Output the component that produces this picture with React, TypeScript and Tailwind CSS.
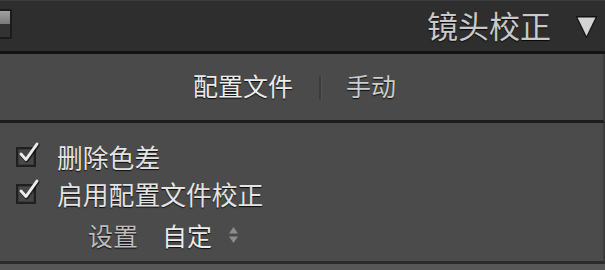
import React from 'react'

const shadow = '[text-shadow:0_1px_1px_rgba(0,0,0,0.85)]'

function CheckBox() {
  return (
    <div className="relative w-[20px] h-[20px] shrink-0">
      <div className="w-full h-full border-2 border-[#202020] bg-[#474747] shadow-[inset_0_0_0_1px_#3a3a3a]" />
      <svg
        className="absolute -top-[5px] left-[2px] w-[22px] h-[22px] overflow-visible"
        viewBox="0 0 22 22"
      >
        <path
          d="M3 12 L8 17.5 L19 2"
          fill="none"
          stroke="#000"
          strokeOpacity="0.55"
          strokeWidth="4"
          strokeLinecap="round"
          strokeLinejoin="round"
          transform="translate(0.6 1)"
        />
        <path
          d="M3 12 L8 17.5 L19 2"
          fill="none"
          stroke="#ededed"
          strokeWidth="3"
          strokeLinecap="round"
          strokeLinejoin="round"
        />
      </svg>
    </div>
  )
}

function CheckRow({ label }: { label: string }) {
  return (
    <div className="h-[37px] flex items-center pl-[16px] gap-[21px]">
      <CheckBox />
      <span className={`text-[25.8px] leading-none text-[#e4e4e4] ${shadow}`}>{label}</span>
    </div>
  )
}

export default function App() {
  return (
    <div className="w-[605px] h-[270px] overflow-hidden flex flex-col bg-[#555] font-['Noto_Sans_CJK_SC','Noto_Sans',sans-serif]">
      {/* panel header */}
      <div className="h-[54px] shrink-0 flex items-center bg-[#2e2e2e] border-t border-[#3c3c3c] border-b-[3px] border-b-[#131313]">
        <div className="w-[12px] h-[30px] -mt-[4px] flex flex-col border-2 border-l-0 border-[#1b1b1b] rounded-r-[2px] overflow-hidden">
          <div className="h-1/2 bg-gradient-to-b from-[#a0a0a0] to-[#7a7a7a]" />
          <div className="h-1/2 bg-[#333]" />
        </div>
        <span className={`ml-auto text-[31px] leading-none text-[#c9c9c9] -mt-[3px] ${shadow}`}>
          镜头校正
        </span>
        <svg className="shrink-0 ml-[24px] mr-[7px] w-[23px] h-[24px] mt-[1px]" viewBox="0 0 23 24">
          <path d="M0.5 1 H22.5 L11.5 23.5 Z" fill="#121212" />
          <path d="M2.5 2.5 H20.5 L11.5 21 Z" fill="#d4d4d4" />
        </svg>
      </div>

      {/* tabs */}
      <div className="h-[69px] shrink-0 flex items-center pl-[193px] bg-[#4a4a4a] border-b-[3px] border-[#1c1c1c] border-r-2 border-r-[#3c3c3c]">
        <span className={`text-[25px] leading-none text-[#ececec] -mt-[4px] ${shadow}`}>配置文件</span>
        <span className="ml-[26px] w-[2px] h-[23px] bg-[#3a3a3a] shadow-[1px_0_0_#555]" />
        <span className={`ml-[25px] text-[25px] leading-none text-[#cdcdcd] -mt-[4px] ${shadow}`}>手动</span>
      </div>

      {/* body */}
      <div className="h-[141px] shrink-0 pt-[15px] bg-[#4b4b4b] border-b-[3px] border-[#2a2a2a] border-r-2 border-r-[#3c3c3c]">
        <CheckRow label="删除色差" />
        <CheckRow label="启用配置文件校正" />
        <div className="h-[46px] flex items-center pl-[88px]">
          <span className={`text-[25px] leading-none text-[#bdbdbd] ${shadow}`}>设置</span>
          <span className={`ml-[24px] text-[25px] leading-none text-[#ececec] ${shadow}`}>自定</span>
          <svg className="ml-[16px] w-[11px] h-[18px]" viewBox="0 0 11 18">
            <path d="M5.5 1 L10 7.5 H1 Z" fill="#8c8c8c" />
            <path d="M1 10.5 H10 L5.5 17 Z" fill="#8c8c8c" />
          </svg>
        </div>
      </div>
      <div className="flex-1 bg-[#575757]" />
    </div>
  )
}
